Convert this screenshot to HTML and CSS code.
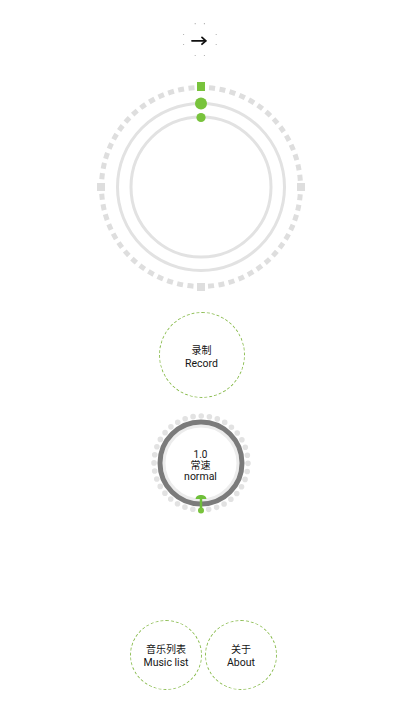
FILE: index.html
```html
<!DOCTYPE html>
<html lang="zh">
<head>
<meta charset="utf-8">
<title>Recorder</title>
<link rel="stylesheet" href="styles.css">
</head>
<body>
<main class="page">
  <div class="top-icon">
    <svg width="34" height="34" viewBox="0 0 34 34">
      <g fill="#a8a8a8">
        <circle cx="12.2" cy="0.7" r="0.6"/><circle cx="21.4" cy="0.7" r="0.6"/>
        <circle cx="0.6" cy="11.5" r="0.6"/><circle cx="0.6" cy="21.5" r="0.6"/>
        <circle cx="33.2" cy="11.5" r="0.6"/><circle cx="33.2" cy="21.5" r="0.6"/>
        <circle cx="12.2" cy="32.5" r="0.6"/><circle cx="21.4" cy="32.5" r="0.6"/>
      </g>
      <g stroke="#111" stroke-width="1.8" fill="none" stroke-linecap="round" stroke-linejoin="round">
        <path d="M9 17.8H22.6"/>
        <path d="M19 14.4L22.8 17.8L19 21.2"/>
      </g>
    </svg>
  </div>

  <div class="dial">
    <svg width="220" height="220" viewBox="0 0 220 220">
      <circle cx="110" cy="110" r="99.5" fill="none" stroke="#dedede" stroke-width="5" stroke-dasharray="6 4.4199" stroke-dashoffset="3"/>
      <g fill="#dedede">
        <rect x="106" y="206" width="8" height="8"/>
        <rect x="6" y="106" width="8" height="8"/>
        <rect x="206" y="106" width="8" height="8"/>
      </g>
      <rect x="106" y="5" width="8" height="9" fill="#78c33c"/>
      <circle cx="110" cy="110" r="83.5" fill="none" stroke="#e2e2e2" stroke-width="3"/>
      <circle cx="110" cy="110" r="70" fill="none" stroke="#e2e2e2" stroke-width="3"/>
      <circle cx="110" cy="26.5" r="6" fill="#78c33c"/>
      <circle cx="110" cy="40.5" r="4.6" fill="#78c33c"/>
    </svg>
  </div>

  <div class="record btn-circle">
    <span class="zh">录制</span>
    <span class="en">Record</span>
  </div>

  <div class="knob">
    <svg class="knob-art" width="110" height="110" viewBox="0 0 110 110">
      <circle cx="55" cy="55" r="47" fill="none" stroke="#e2e2e2" stroke-width="5.6" stroke-linecap="round" stroke-dasharray="0 8.2030" transform="rotate(90 55 55)"/>
      <circle cx="55" cy="55" r="37" fill="none" stroke="#ececec" stroke-width="3"/>
      <circle cx="55" cy="55" r="41" fill="none" stroke="#7b7b7b" stroke-width="5"/>
      <path d="M49.6 91 C49.6 85.6 60.4 85.6 60.4 91 Z" fill="#6fbf3a"/>
      <rect x="53.8" y="89" width="2.4" height="12" fill="#6fbf3a"/>
      <circle cx="55" cy="102.5" r="3" fill="#78c33c"/>
    </svg>
    <div class="knob-text">
      <span>1.0</span>
      <span>常速</span>
      <span>normal</span>
    </div>
  </div>

  <div class="bottom-row">
    <div class="btn-circle small">
      <span class="zh">音乐列表</span>
      <span class="en">Music list</span>
    </div>
    <div class="btn-circle small">
      <span class="zh">关于</span>
      <span class="en">About</span>
    </div>
  </div>
</main>
</body>
</html>
```

FILE: styles.css
```css
html, body {
  margin: 0;
  padding: 0;
  background: #ffffff;
}

body {
  font-family: Roboto, "Noto Sans CJK SC", "Noto Sans", sans-serif;
  color: #151515;
}

.page {
  width: 400px;
  display: flex;
  flex-direction: column;
  align-items: center;
}

.top-icon {
  margin-top: 23px;
  width: 34px;
  height: 34px;
}

.top-icon svg,
.dial svg,
.knob-art {
  display: block;
}

.dial {
  margin-top: 20px;
  width: 220px;
  height: 220px;
  margin-left: 1px;
}

.btn-circle {
  box-sizing: border-box;
  border: 1px dashed #8cbd52;
  border-radius: 50%;
  display: flex;
  flex-direction: column;
  align-items: center;
  justify-content: center;
  font-size: 10px;
  line-height: 13px;
}

.btn-circle .en {
  font-size: 10.5px;
}

.record {
  margin-top: 15px;
  width: 86px;
  height: 86px;
  margin-left: 3px;
  padding-top: 4px;
}

.knob {
  margin-top: 10px;
  width: 110px;
  height: 110px;
  display: grid;
  margin-left: 1px;
}

.knob-art,
.knob-text {
  grid-area: 1 / 1;
}

.knob-text {
  display: flex;
  flex-direction: column;
  align-items: center;
  justify-content: center;
  font-size: 10px;
  line-height: 11px;
  padding-top: 4px;
}

.knob-text span:last-child {
  font-size: 10.5px;
}

.bottom-row {
  margin-top: 102px;
  display: flex;
  gap: 3px;
  padding-left: 7px;
}

.btn-circle.small {
  width: 72px;
  height: 70px;
  padding-top: 1px;
}
```
